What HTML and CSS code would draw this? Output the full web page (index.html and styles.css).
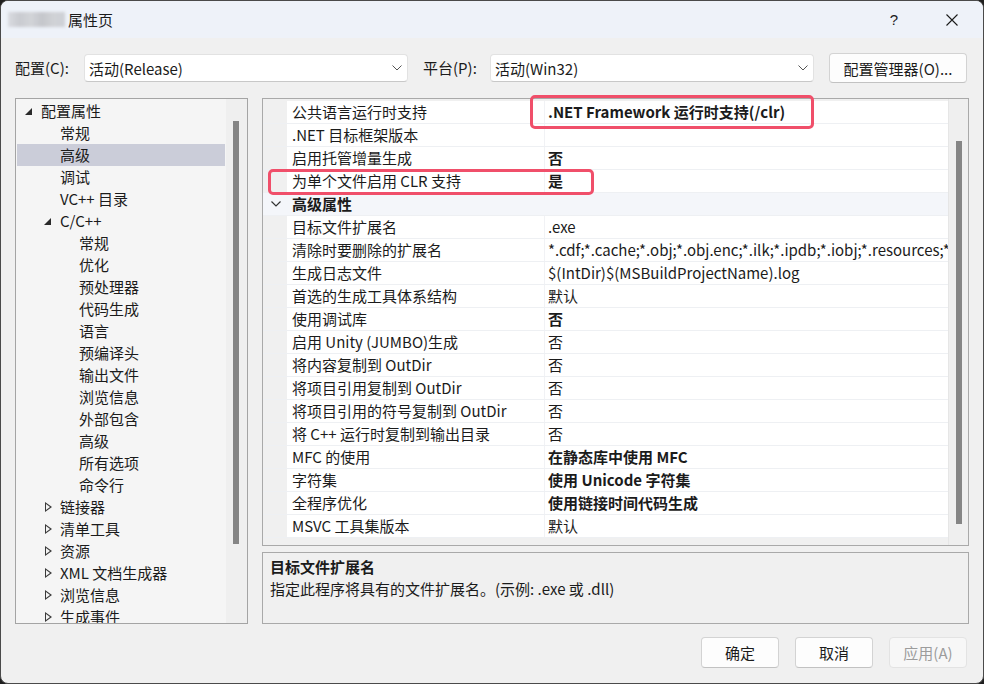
FILE: index.html
```html
<!DOCTYPE html>
<html lang="zh-CN">
  <head>
    <meta charset="UTF-8" />
    <title>属性页</title>
    <link rel="stylesheet" href="styles.css">
  </head>
  <body>
    <div class="window">
      <div class="titlebar">
        <span class="blur_name"></span>
        <span class="title">属性页</span>
        <span class="title_help">?</span>
        <span class="title_close">
          <svg width="12" height="12" viewBox="0 0 12 12"><path d="M0.5 0.5 L11.5 11.5 M11.5 0.5 L0.5 11.5" stroke="#1b1b1b" stroke-width="1.1" fill="none"/></svg>
        </span>
      </div>

      <div class="config_row">
        <span class="label label_config">配置(C):</span>
        <div class="select">
          <span>活动(Release)</span>
          <svg class="chev" width="10" height="6" viewBox="0 0 10 6"><path d="M0.5 0.5 L5 5 L9.5 0.5" stroke="#555" stroke-width="1" fill="none"/></svg>
        </div>
        <span class="label label_platform">平台(P):</span>
        <div class="select">
          <span>活动(Win32)</span>
          <svg class="chev" width="10" height="6" viewBox="0 0 10 6"><path d="M0.5 0.5 L5 5 L9.5 0.5" stroke="#555" stroke-width="1" fill="none"/></svg>
        </div>
        <button type="button" class="btn btn_manager">配置管理器(O)...</button>
      </div>

      <div class="main">
        <div class="tree">
          <ul class="tree_list">
            <li class="lv0"><i class="tg open"></i>配置属性</li>
            <li class="lv1"><i class="tg"></i>常规</li>
            <li class="lv1 selected"><i class="tg"></i>高级</li>
            <li class="lv1"><i class="tg"></i>调试</li>
            <li class="lv1"><i class="tg"></i>VC++ 目录</li>
            <li class="lv1"><i class="tg open"></i>C/C++</li>
            <li class="lv2"><i class="tg"></i>常规</li>
            <li class="lv2"><i class="tg"></i>优化</li>
            <li class="lv2"><i class="tg"></i>预处理器</li>
            <li class="lv2"><i class="tg"></i>代码生成</li>
            <li class="lv2"><i class="tg"></i>语言</li>
            <li class="lv2"><i class="tg"></i>预编译头</li>
            <li class="lv2"><i class="tg"></i>输出文件</li>
            <li class="lv2"><i class="tg"></i>浏览信息</li>
            <li class="lv2"><i class="tg"></i>外部包含</li>
            <li class="lv2"><i class="tg"></i>高级</li>
            <li class="lv2"><i class="tg"></i>所有选项</li>
            <li class="lv2"><i class="tg"></i>命令行</li>
            <li class="lv1"><i class="tg closed"></i>链接器</li>
            <li class="lv1"><i class="tg closed"></i>清单工具</li>
            <li class="lv1"><i class="tg closed"></i>资源</li>
            <li class="lv1"><i class="tg closed"></i>XML 文档生成器</li>
            <li class="lv1"><i class="tg closed"></i>浏览信息</li>
            <li class="lv1"><i class="tg closed"></i>生成事件</li>
          </ul>
          <div class="vscroll tree_scroll"><div class="thumb"></div></div>
        </div>

        <div class="right">
          <div class="grid">
            <div class="rows">
              <div class="row"><span class="gut"></span><span class="name">公共语言运行时支持</span><span class="value bold">.NET Framework 运行时支持(/clr)</span></div>
              <div class="row"><span class="gut"></span><span class="name">.NET 目标框架版本</span><span class="value"></span></div>
              <div class="row"><span class="gut"></span><span class="name">启用托管增量生成</span><span class="value bold">否</span></div>
              <div class="row"><span class="gut"></span><span class="name">为单个文件启用 CLR 支持</span><span class="value bold">是</span></div>
              <div class="row category">
                <span class="gut"><svg width="10" height="6" viewBox="0 0 10 6"><path d="M0.5 0.5 L5 5 L9.5 0.5" stroke="#333" stroke-width="1.2" fill="none"/></svg></span>
                <span class="name">高级属性</span>
              </div>
              <div class="row"><span class="gut"></span><span class="name">目标文件扩展名</span><span class="value">.exe</span></div>
              <div class="row"><span class="gut"></span><span class="name">清除时要删除的扩展名</span><span class="value">*.cdf;*.cache;*.obj;*.obj.enc;*.ilk;*.ipdb;*.iobj;*.resources;*.tlb;*.tli;*.tlh;*.tmp</span></div>
              <div class="row"><span class="gut"></span><span class="name">生成日志文件</span><span class="value">$(IntDir)$(MSBuildProjectName).log</span></div>
              <div class="row"><span class="gut"></span><span class="name">首选的生成工具体系结构</span><span class="value">默认</span></div>
              <div class="row"><span class="gut"></span><span class="name">使用调试库</span><span class="value bold">否</span></div>
              <div class="row"><span class="gut"></span><span class="name">启用 Unity (JUMBO)生成</span><span class="value">否</span></div>
              <div class="row"><span class="gut"></span><span class="name">将内容复制到 OutDir</span><span class="value">否</span></div>
              <div class="row"><span class="gut"></span><span class="name">将项目引用复制到 OutDir</span><span class="value">否</span></div>
              <div class="row"><span class="gut"></span><span class="name">将项目引用的符号复制到 OutDir</span><span class="value">否</span></div>
              <div class="row"><span class="gut"></span><span class="name">将 C++ 运行时复制到输出目录</span><span class="value">否</span></div>
              <div class="row"><span class="gut"></span><span class="name">MFC 的使用</span><span class="value bold">在静态库中使用 MFC</span></div>
              <div class="row"><span class="gut"></span><span class="name">字符集</span><span class="value bold">使用 Unicode 字符集</span></div>
              <div class="row"><span class="gut"></span><span class="name">全程序优化</span><span class="value bold">使用链接时间代码生成</span></div>
              <div class="row"><span class="gut"></span><span class="name">MSVC 工具集版本</span><span class="value">默认</span></div>
            </div>
            <div class="vscroll grid_scroll"><div class="thumb"></div></div>
            <!-- highlight boxes -->
            <div class="mark mark_clr"></div>
            <div class="mark mark_file"></div>
          </div>

          <div class="desc">
            <p class="desc_title">目标文件扩展名</p>
            <p class="desc_text">指定此程序将具有的文件扩展名。(示例: .exe 或 .dll)</p>
          </div>
        </div>
      </div>

      <div class="buttons">
        <button type="button" class="btn btn_ok">确定</button>
        <button type="button" class="btn btn_cancel">取消</button>
        <button type="button" class="btn btn_apply" disabled>应用(A)</button>
      </div>
    </div>
  </body>
</html>
```

FILE: styles.css
```css
* {
  margin: 0;
  padding: 0;
  box-sizing: border-box;
}

html,
body {
  width: 984px;
  height: 684px;
  overflow: hidden;
  background: #1f1f1f;
}

body {
  font-family: "Noto Sans CJK SC", "Noto Sans", sans-serif;
  font-size: 15px;
  color: #1b1b1b;
}

ul,
li {
  list-style: none;
}

.window {
  width: 984px;
  height: 684px;
  background: #f0f0f0;
  border: 1px solid #4a4a4a;
  border-radius: 8px;
  overflow: hidden;
  display: flex;
  flex-direction: column;
}

/* title bar */
.titlebar {
  height: 37px;
  flex: none;
  background: #eef2f9;
  display: flex;
  align-items: center;
  padding-left: 7px;
}

.blur_name {
  width: 57px;
  height: 15px;
  margin-right: 3px;
  background: linear-gradient(90deg, #d9dbe0 0, #c9cbd0 20%, #d2d4d8 40%, #c4c6cb 60%, #d0d2d6 80%, #cdd0d5 100%);
  filter: blur(1.5px);
}

.title {
  font-size: 15px;
  line-height: 20px;
}

.title_help {
  margin-left: auto;
  margin-right: 48px;
  font-family: "Liberation Sans", sans-serif;
  font-size: 15px;
}

.title_close {
  width: 12px;
  height: 12px;
  margin-right: 25px;
  display: flex;
}

/* config row */
.config_row {
  height: 60px;
  flex: none;
  display: flex;
  align-items: center;
  padding: 0 15px 0 14px;
}

.label {
  line-height: 20px;
}

.label_config {
  width: 69px;
}

.label_platform {
  width: 67px;
  margin-left: 15px;
}

.select {
  width: 324px;
  height: 28px;
  background: #fff;
  border: 1px solid #e2e2e2;
  border-bottom-color: #c8c8c8;
  border-radius: 4px;
  display: flex;
  align-items: center;
  padding: 0 5px 0 4px;
}

.select .chev {
  margin-left: auto;
}

.btn {
  font-family: inherit;
  font-size: 15px;
  color: #1b1b1b;
  background: #fdfdfd;
  border: 1px solid #d3d3d3;
  border-bottom-color: #c2c2c2;
  border-radius: 4px;
}

.btn_manager {
  width: 138px;
  height: 30px;
  margin-left: 15px;
}

/* main area */
.main {
  height: 526px;
  flex: none;
  display: flex;
  padding: 0 14px;
  gap: 14px;
}

.tree {
  width: 234px;
  height: 526px;
  border: 1px solid #a4a4a4;
  background: #f5f5f5;
  display: flex;
  overflow: hidden;
}

.tree_list {
  flex: 1;
  padding-top: 1px;
}

.tree_list li {
  height: 22px;
  line-height: 22px;
  display: flex;
  align-items: center;
  white-space: nowrap;
  margin-right: 1px;
  margin-left: 1px;
}

.tree_list .lv0 {
  padding-left: 8px;
}

.tree_list .lv1 {
  padding-left: 27px;
}

.tree_list .lv2 {
  padding-left: 46px;
}

.tree_list .selected {
  background: #cbcdd9;
}

.tg {
  width: 16px;
  height: 22px;
  flex: none;
  position: relative;
}

.tg.open::before {
  content: "";
  position: absolute;
  left: 0;
  top: 8px;
  border-style: solid;
  border-width: 0 0 7px 7px;
  border-color: transparent transparent #2a2a2a transparent;
}

.tg.closed::before {
  content: "";
  position: absolute;
  left: 1px;
  top: 6px;
  width: 0;
  height: 0;
  border-style: solid;
  border-width: 5px 0 5px 7px;
  border-color: transparent transparent transparent #3a3a3a;
}

.tg.closed::after {
  content: "";
  position: absolute;
  left: 2px;
  top: 8px;
  border-style: solid;
  border-width: 3px 0 3px 4px;
  border-color: transparent transparent transparent #f5f5f5;
}

.vscroll {
  width: 21px;
  flex: none;
  background: #efefef;
  position: relative;
}

.vscroll .thumb {
  position: absolute;
  width: 6px;
  left: 7px;
  background: #858585;
}

.tree_scroll .thumb {
  top: 22px;
  height: 423px;
}

/* property grid */
.right {
  width: 707px;
  display: flex;
  flex-direction: column;
  gap: 6px;
}

.grid {
  height: 448px;
  border: 1px solid #a9a9a9;
  background: #f0f0f0;
  display: flex;
  position: relative;
}

.rows {
  flex: 1;
  padding-top: 2px;
  overflow: hidden;
}

.row {
  height: 23px;
  display: flex;
  border-bottom: 1px solid #eef0f3;
}

.row .gut {
  width: 24px;
  flex: none;
  background: #f0f0f0;
  display: flex;
  align-items: center;
  justify-content: center;
  padding-left: 1px;
}

.row .name {
  width: 258px;
  flex: none;
  background: #fff;
  padding-left: 5px;
  line-height: 22px;
  white-space: nowrap;
  border-right: 1px solid #f1f2f5;
}

.row .value {
  flex: 1;
  background: #fff;
  padding-left: 3px;
  line-height: 22px;
  white-space: nowrap;
  overflow: hidden;
}

.row .bold {
  font-weight: bold;
}

.row.category .gut,
.row.category .name {
  background: #f4f6fa;
}

.row.category .name {
  flex: 1;
  font-weight: bold;
  border-right: none;
}

.grid_scroll {
  width: 20px;
  border-left: 1px solid #e6e6e6;
}

.grid_scroll .thumb {
  top: 42px;
  height: 383px;
}

.mark {
  position: absolute;
  border: 3px solid #f04f6a;
  border-radius: 5px;
}

.mark_clr {
  left: 267px;
  top: -4px;
  width: 284px;
  height: 34px;
}

.mark_file {
  left: 5px;
  top: 70px;
  width: 326px;
  height: 26px;
}

/* description */
.desc {
  height: 72px;
  border: 1px solid #a9a9a9;
  padding: 3px 0 0 7px;
}

.desc_title {
  font-weight: bold;
  line-height: 22px;
}

.desc_text {
  line-height: 22px;
}

/* bottom buttons */
.buttons {
  flex: 1;
  display: flex;
  justify-content: flex-end;
  align-items: flex-start;
  padding: 13px 16px 0 0;
  gap: 16px;
}

.buttons .btn {
  width: 78px;
  height: 31px;
}

.btn_apply {
  color: #9c9c9c;
  background: #f7f7f7;
  border-color: #e3e3e3;
}
```
